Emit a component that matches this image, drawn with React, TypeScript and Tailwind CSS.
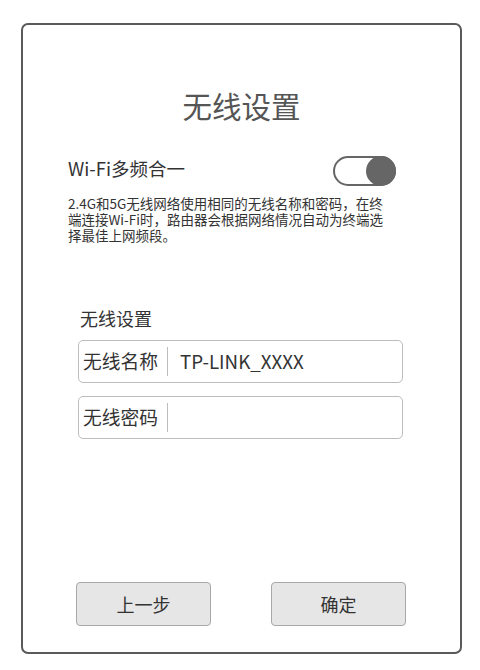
import React from "react";

const font = { fontFamily: '"Noto Sans CJK SC", "Noto Sans", sans-serif' };

export default function App() {
  return (
    <div className="w-[480px] h-[670px] bg-white pt-[23px] pl-[21px]" style={font}>
      <div className="w-[441px] h-[631px] border-2 border-[#5a5a5a] rounded-[7px] flex flex-col">
        <div className="mt-[63px] text-center text-[29.5px] leading-[34px] text-[#555555]">无线设置</div>

        <div className="mt-[36px] ml-[45px] w-[328px] flex justify-between items-start">
          <div className="text-[18.5px] leading-[22px] text-[#333333] mt-[-1px]">Wi-Fi多频合一</div>
          <div className="w-[63px] h-[30px] rounded-full border-2 border-[#666666] flex justify-end items-center mt-[-2px]">
            <div className="w-[30px] h-[30px] rounded-full bg-[#666666] mr-[-2px]"></div>
          </div>
        </div>

        <div className="mt-[9px] ml-[45px] text-[13.5px] leading-[16px] text-[#333333]">
          <div>2.4G和5G无线网络使用相同的无线名称和密码，在终</div>
          <div>端连接Wi-Fi时，路由器会根据网络情况自动为终端选</div>
          <div>择最佳上网频段。</div>
        </div>

        <div className="mt-[65px] ml-[57px] text-[18px] leading-[21px] text-[#333333]">无线设置</div>

        <div className="mt-[11px] ml-[55px] w-[325px] h-[43px] border-[1.5px] border-[#bdbdbd] rounded-[5px] flex items-center">
          <div className="pl-[4px] w-[88px] text-[18.75px] text-[#333333]">无线名称</div>
          <div className="w-px h-[29px] bg-[#bdbdbd]"></div>
          <div className="pl-[12px] text-[18.75px] text-[#333333]">TP-LINK_XXXX</div>
        </div>

        <div className="mt-[13px] ml-[55px] w-[325px] h-[43px] border-[1.5px] border-[#bdbdbd] rounded-[5px] flex items-center">
          <div className="pl-[4px] w-[88px] text-[18.75px] text-[#333333]">无线密码</div>
          <div className="w-px h-[29px] bg-[#bdbdbd]"></div>
        </div>

        <div className="mt-auto mb-[26px] flex">
          <button className="ml-[53px] w-[135px] h-[44px] bg-[#e6e6e6] border border-[#a8a8a8] rounded-[4px] text-[18px] text-[#333333]">上一步</button>
          <button className="ml-[60px] w-[135px] h-[44px] bg-[#e6e6e6] border border-[#a8a8a8] rounded-[4px] text-[18px] text-[#333333]">确定</button>
        </div>
      </div>
    </div>
  );
}
